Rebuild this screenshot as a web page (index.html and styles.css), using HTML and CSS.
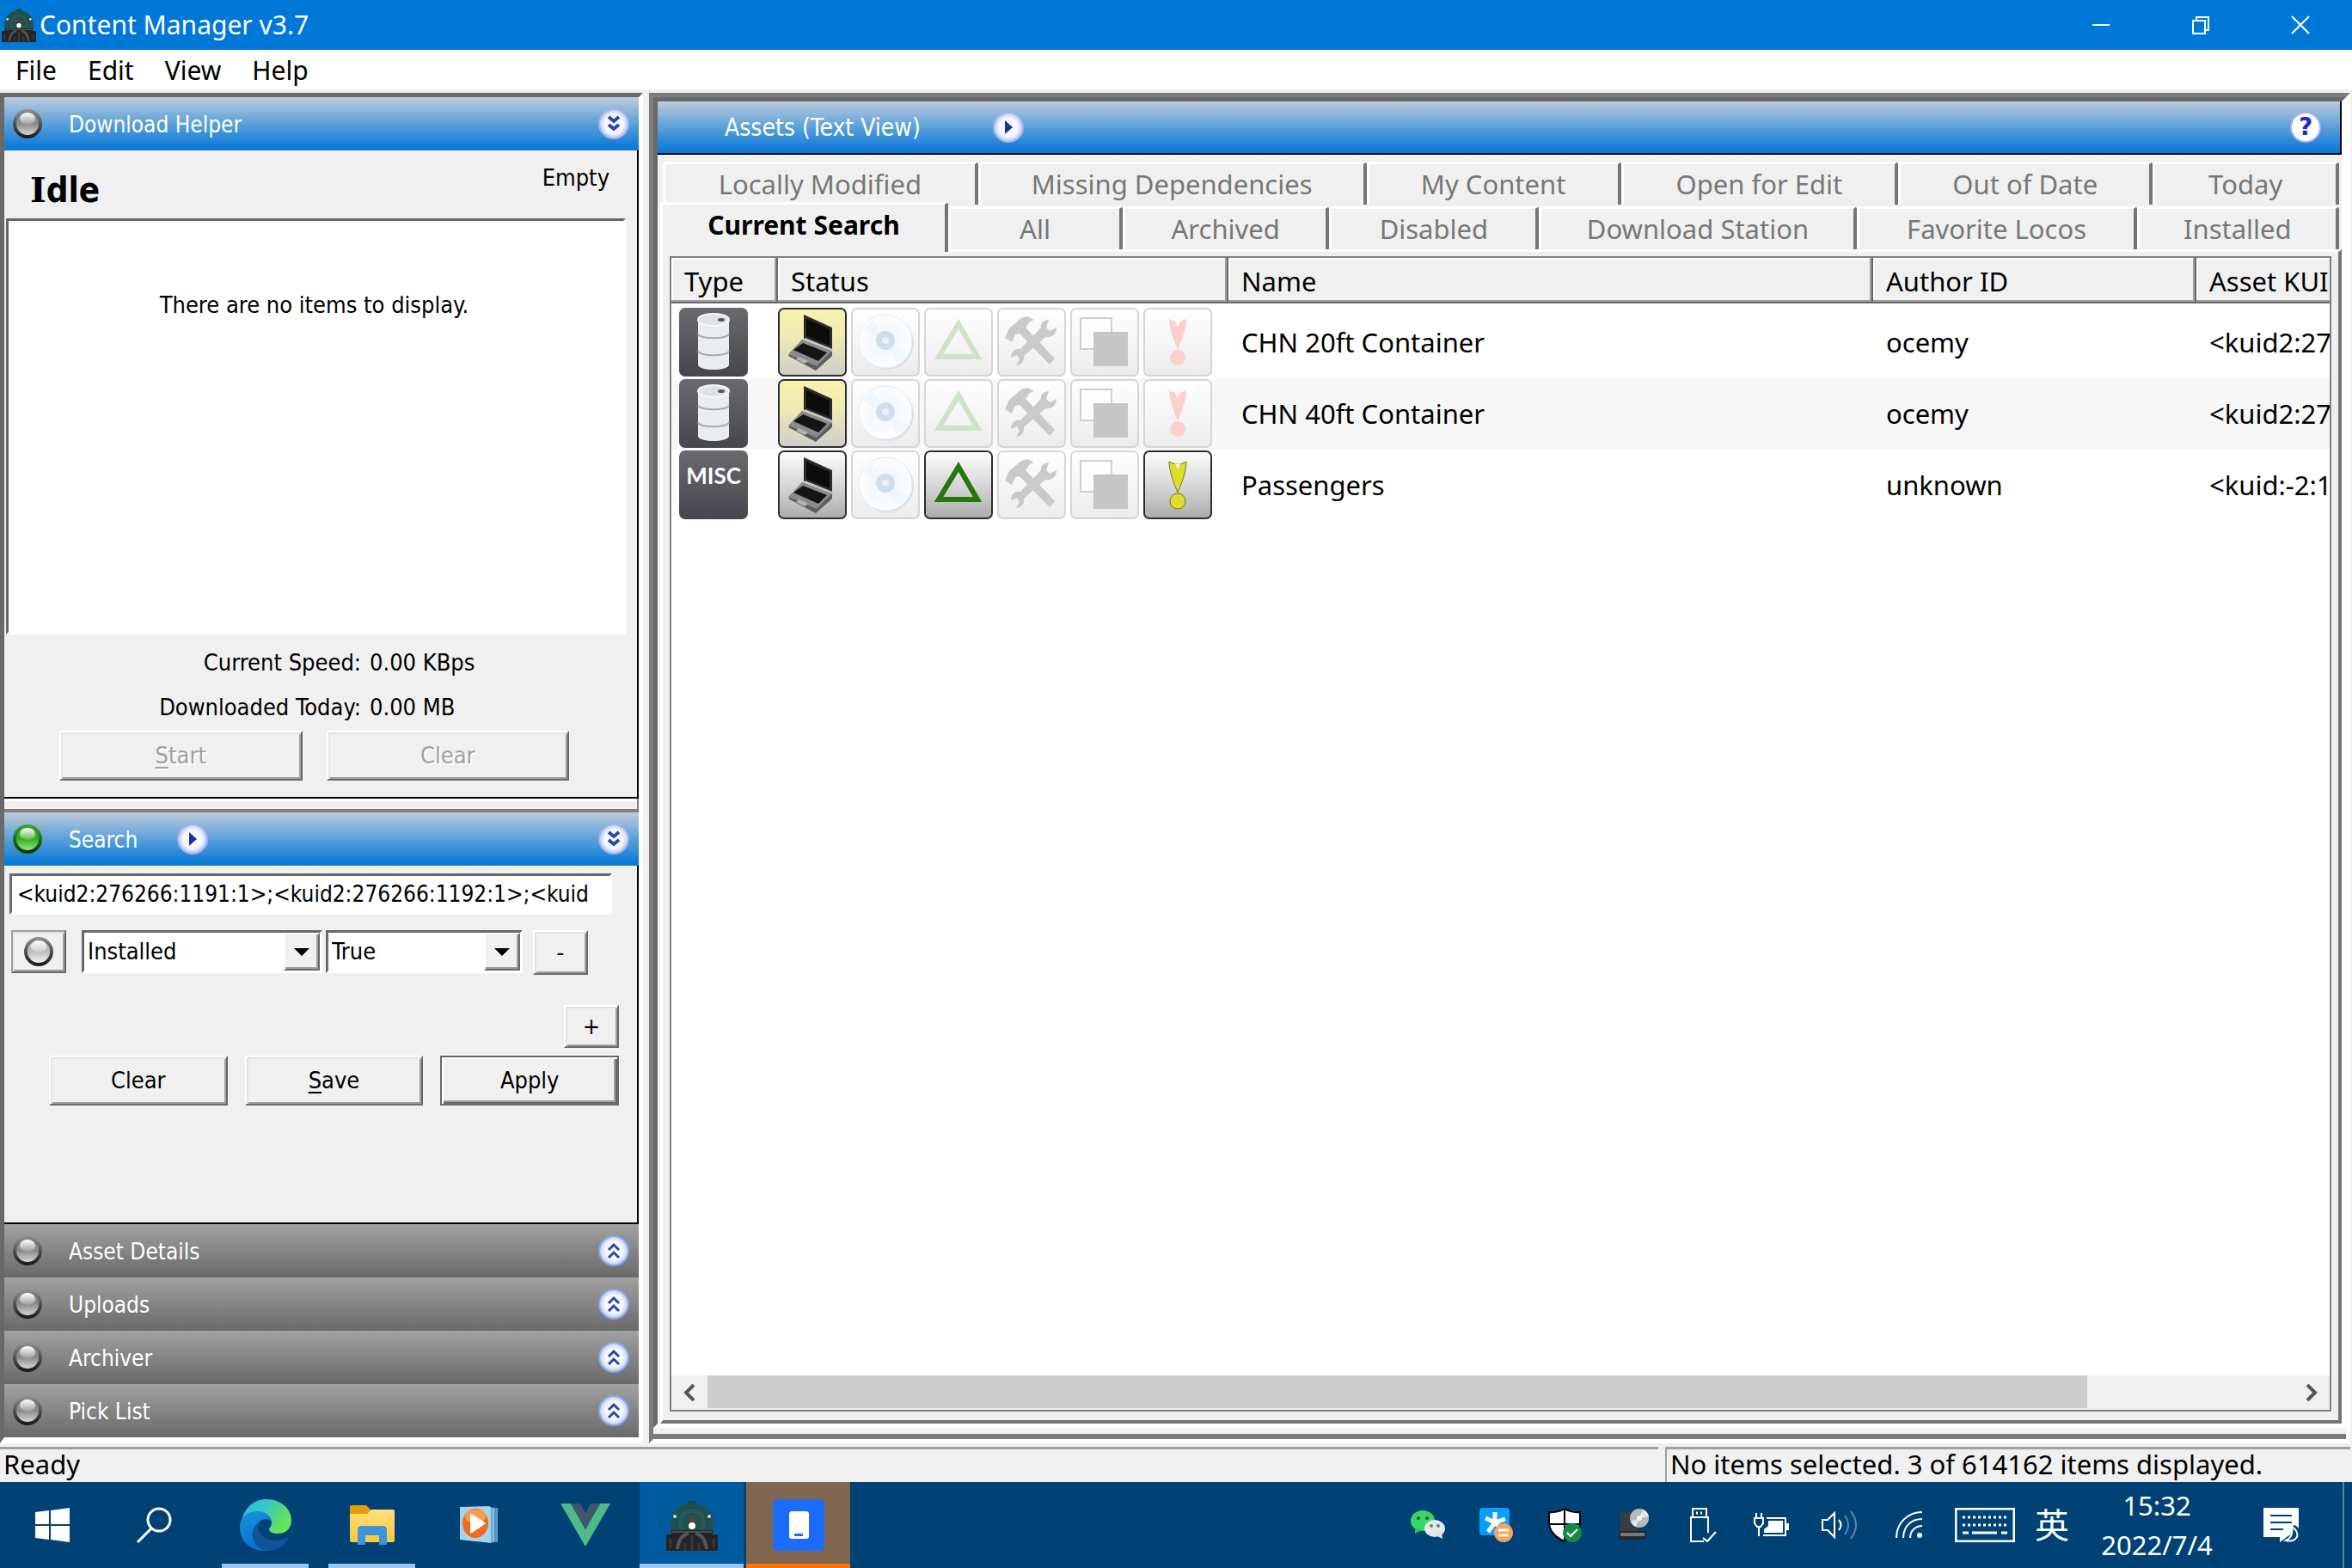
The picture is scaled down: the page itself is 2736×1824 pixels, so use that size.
FILE: index.html
```html
<!DOCTYPE html>
<html lang="en">
<head>
<meta charset="utf-8">
<meta name="viewport" content="width=device-width, initial-scale=1">
<title>Content Manager v3.7</title>
<link rel="stylesheet" href="styles.css">
</head>
<body>
<svg class="defs" aria-hidden="true">
  <defs>
    <linearGradient id="g-dark" x1="0" y1="0" x2="0" y2="1"><stop offset="0" stop-color="#6b6970"/><stop offset="1" stop-color="#47464d"/></linearGradient>
    <linearGradient id="g-yellow" x1="0" y1="0" x2="0" y2="1"><stop offset="0" stop-color="#f8f3ae"/><stop offset=".4" stop-color="#efebb2"/><stop offset="1" stop-color="#cfcfcb"/></linearGradient>
    <linearGradient id="g-grey" x1="0" y1="0" x2="0" y2="1"><stop offset="0" stop-color="#fdfdfd"/><stop offset=".45" stop-color="#dcdcdc"/><stop offset="1" stop-color="#ababab"/></linearGradient>
    <linearGradient id="g-faint" x1="0" y1="0" x2="0" y2="1"><stop offset="0" stop-color="#ffffff"/><stop offset="1" stop-color="#ececec"/></linearGradient>
    <linearGradient id="g-led" x1="0" y1="0" x2="0" y2="1"><stop offset="0" stop-color="#8d8d8d"/><stop offset=".5" stop-color="#8a8a8a"/><stop offset="1" stop-color="#e2e2e2"/></linearGradient>
    <linearGradient id="g-pale" x1="0" y1="0" x2="0" y2="1"><stop offset="0" stop-color="#c8c8c8"/><stop offset=".5" stop-color="#bdbdbd"/><stop offset="1" stop-color="#fafafa"/></linearGradient>
    <linearGradient id="g-ring" x1="0" y1="0" x2="0" y2="1"><stop offset="0" stop-color="#8b8b8b"/><stop offset="1" stop-color="#1c1c1c"/></linearGradient>
    <linearGradient id="g-green" x1="0" y1="0" x2="0" y2="1"><stop offset="0" stop-color="#3fae2c"/><stop offset=".5" stop-color="#35ad22"/><stop offset="1" stop-color="#a5ee86"/></linearGradient>
    <linearGradient id="g-gring" x1="0" y1="0" x2="0" y2="1"><stop offset="0" stop-color="#3fa03a"/><stop offset="1" stop-color="#0a3808"/></linearGradient>
    <linearGradient id="g-gloss" x1="0" y1="0" x2="0" y2="1"><stop offset="0" stop-color="#fff"/><stop offset="1" stop-color="#fff" stop-opacity=".15"/></linearGradient>
    <radialGradient id="g-orb"><stop offset="0" stop-color="#fff"/><stop offset=".65" stop-color="#f4f6ff"/><stop offset="1" stop-color="#b4c4f2"/></radialGradient>
    <radialGradient id="g-cd"><stop offset="0" stop-color="#fff"/><stop offset=".35" stop-color="#f3f8fc"/><stop offset="1" stop-color="#fcfdff"/></radialGradient>
    <linearGradient id="g-e1" x1="0" y1="0" x2="1" y2=".4"><stop offset="0" stop-color="#2fb4ee"/><stop offset=".5" stop-color="#36c8c0"/><stop offset="1" stop-color="#6be356"/></linearGradient>
    <linearGradient id="g-e2" x1="0" y1="0" x2=".4" y2="1"><stop offset="0" stop-color="#1795dd"/><stop offset="1" stop-color="#0c6fd0"/></linearGradient>
    <linearGradient id="g-fold" x1="0" y1="0" x2="0" y2="1"><stop offset="0" stop-color="#ffe07a"/><stop offset="1" stop-color="#f8c83c"/></linearGradient>

    <symbol id="led" viewBox="0 0 36 36"><circle cx="18" cy="18" r="15" fill="url(#g-led)" stroke="url(#g-ring)" stroke-width="4"/><ellipse cx="18" cy="12" rx="9" ry="7" fill="url(#g-gloss)"/></symbol>
    <symbol id="led-pale" viewBox="0 0 36 36"><circle cx="18" cy="18" r="15" fill="url(#g-pale)" stroke="url(#g-ring)" stroke-width="4"/><ellipse cx="18" cy="12" rx="9" ry="7" fill="url(#g-gloss)"/></symbol>
    <symbol id="led-on" viewBox="0 0 36 36"><circle cx="18" cy="18" r="15" fill="url(#g-green)" stroke="url(#g-gring)" stroke-width="4"/><ellipse cx="18" cy="12" rx="9" ry="7" fill="url(#g-gloss)"/></symbol>
    <symbol id="orb-down" viewBox="0 0 36 36"><circle cx="18" cy="18" r="17" fill="url(#g-orb)" stroke="#a3b2ea" stroke-width="2"/><path d="M12 10l6 5 6-5M12 19l6 5 6-5" fill="none" stroke="#2748a8" stroke-width="4"/></symbol>
    <symbol id="orb-up" viewBox="0 0 36 36"><circle cx="18" cy="18" r="17" fill="url(#g-orb)" stroke="#88a6ea" stroke-width="2"/><path d="M12 17l6-6 6 6M12 26l6-6 6 6" fill="none" stroke="#2748a8" stroke-width="3"/></symbol>
    <symbol id="orb-play" viewBox="0 0 36 36"><circle cx="18" cy="18" r="17" fill="url(#g-orb)" stroke="#a3b2ea" stroke-width="2"/><path d="M14 10l9 8-9 8z" fill="#1b2fa0"/></symbol>

    <symbol id="barrel" viewBox="0 0 80 80"><rect width="80" height="80" rx="7" fill="url(#g-dark)"/><path d="M22 14v52c0 8 36 8 36 0V14z" fill="#e9edef"/><ellipse cx="40" cy="14" rx="18" ry="7" fill="#dfe3e6" stroke="#f6f8f9" stroke-width="2"/><path d="M22 30c0 7 36 7 36 0M22 50c0 7 36 7 36 0" fill="none" stroke="#a5abb0" stroke-width="2"/><ellipse cx="49" cy="14" rx="4" ry="2" fill="#55565c"/></symbol>
    <symbol id="misc" viewBox="0 0 80 80"><rect width="80" height="80" rx="7" fill="url(#g-dark)"/><text x="40" y="39" text-anchor="middle" class="misc-text">MISC</text></symbol>
    <symbol id="laptop" viewBox="0 0 80 80"><path d="M30 8l33 15v26L30 36z" fill="#2a2a2a"/><path d="M33 13l27 12v19L33 33z" fill="#0c0c0c"/><path d="M28 37l35 14v5L44 73 12 56z" fill="#5c5c5c"/><path d="M28 37l35 13-18 18-33-14z" fill="#8b8b8b"/><path d="M29 41l28 11-10 10-29-13z" fill="#141414"/><path d="M24 57l11 5-4 3-10-5z" fill="#b4b4b4"/><path d="M31 36l32 13" stroke="#c5c5c5" stroke-width="2"/></symbol>
    <symbol id="on-yellow" viewBox="0 0 80 80"><rect x="1" y="1" width="78" height="78" rx="6" fill="url(#g-yellow)" stroke="#2f2f2f" stroke-width="2"/></symbol>
    <symbol id="on-grey" viewBox="0 0 80 80"><rect x="1" y="1" width="78" height="78" rx="6" fill="url(#g-grey)" stroke="#2f2f2f" stroke-width="2"/></symbol>
    <symbol id="off" viewBox="0 0 80 80"><rect x="1" y="1" width="78" height="78" rx="6" fill="url(#g-faint)" stroke="#d6d6d6" stroke-width="2"/></symbol>
    <symbol id="cd" viewBox="0 0 80 80"><use href="#off"/><circle cx="42" cy="41" r="31" fill="#dcdfe3"/><circle cx="40" cy="39" r="31" fill="url(#g-cd)" stroke="#e6edf4"/><path d="M40 39L14 26A29 29 0 0 1 26 14z M40 39L66 52A29 29 0 0 1 54 64z" fill="#f0f7fc"/><circle cx="40" cy="38" r="11" fill="#cbdff1"/><circle cx="40" cy="38" r="4" fill="#efeef0"/></symbol>
    <symbol id="tri-off" viewBox="0 0 80 80"><use href="#off"/><path d="M40 19L62 57H17z" fill="none" stroke="#cfe3c9" stroke-width="6"/></symbol>
    <symbol id="tri-on" viewBox="0 0 80 80"><use href="#on-grey"/><path d="M40 19L62 57H17z" fill="none" stroke="#24780c" stroke-width="6"/></symbol>
    <symbol id="tools" viewBox="0 0 80 80"><use href="#off"/><g fill="#cbc9ca"><path d="M9 35l5-11 14-12 7-2 8 4-5 2-5 7 34 36-6 7-35-36-5 1-4 9z"/><path d="M60 14l-3 9 4 4 8-4c0 8-6 12-13 11L31 56c1 6-3 11-9 11l4-7-3-5-7 3c0-7 5-11 11-10l24-25c-1-5 3-9 9-9z"/></g></symbol>
    <symbol id="copies" viewBox="0 0 80 80"><use href="#off"/><rect x="12" y="12" width="36" height="36" fill="#fdfdfd" stroke="#cfcfcf" stroke-width="2"/><rect x="27" y="28" width="40" height="40" fill="#c6c6c6"/></symbol>
    <symbol id="bang-off" viewBox="0 0 80 80"><use href="#off"/><path d="M30 13q10 6 20 0c0 12-6 26-10 36-4-10-10-24-10-36z" fill="#fccfcd"/><circle cx="40" cy="58" r="9" fill="#fccfcd"/><path d="M36 14q4 3 8 0l-4 8z" fill="#fff"/></symbol>
    <symbol id="bang-on" viewBox="0 0 80 80"><use href="#on-grey"/><g stroke="#77751c" stroke-width="1"><path d="M30 13q10 6 20 0c0 12-6 26-10 36-4-10-10-24-10-36z" fill="#dedc2c"/><circle cx="40" cy="59" r="9" fill="#dedc2c"/></g><path d="M36 14q4 3 8 0l-4 8z" fill="#fbf3c0"/></symbol>

    <symbol id="train" viewBox="0 0 60 60"><path d="M25 2h10v5H25z" fill="#17434a"/><path d="M5 42V29C5 15 15 5 30 5s25 10 25 24v13z" fill="#204f50"/><circle cx="30" cy="27" r="17" fill="#245856" stroke="#1b4547"/><circle cx="30" cy="27" r="10" fill="#225150" stroke="#1a4142"/><path d="M0 41h6v-5h48v5h6v19H0z" fill="#232427"/><path d="M7 38h46" stroke="#4f4c4a" stroke-width="2"/><path d="M13 58q2-16 13-18M47 58q-2-16-13-18" fill="none" stroke="#555454" stroke-width="4"/><path d="M5 46v10M22 50v10M30 42v18M38 50v10M55 46v10" stroke="#3a3736" stroke-width="3"/><path d="M27 20h6v8h-6z" fill="#5b3f35"/><circle cx="30" cy="31" r="4" fill="#fff"/><circle cx="10" cy="20" r="2" fill="#d5e6e6"/><circle cx="50" cy="20" r="2" fill="#d5e6e6"/></symbol>
  </defs>
</svg>

<header class="titlebar">
  <svg class="app-icon" aria-hidden="true"><use href="#train"/></svg>
  <h1 class="app-title">Content Manager v3.7</h1>
  <div class="window-controls">
    <button type="button" aria-label="Minimize"><svg width="22" height="22" viewBox="0 0 22 22"><path d="M1 11h20" stroke="#fff" stroke-width="2"/></svg></button>
    <button type="button" aria-label="Restore"><svg width="22" height="22" viewBox="0 0 22 22" fill="none" stroke="#fff" stroke-width="2"><path d="M2 6h14v15H2zM6 6V2h14v15h-4"/></svg></button>
    <button type="button" aria-label="Close"><svg width="22" height="22" viewBox="0 0 22 22"><path d="M1 1l20 20M21 1L1 21" stroke="#fff" stroke-width="2"/></svg></button>
  </div>
</header>

<nav class="menubar">
  <button type="button">File</button><button type="button">Edit</button><button type="button">View</button><button type="button">Help</button>
</nav>

<main class="workspace">
  <aside class="sidebar">
    <section class="panel">
      <header class="bar bar-blue">
        <svg class="orb" aria-hidden="true"><use href="#led"/></svg>
        <h2>Download Helper</h2>
        <button type="button" class="orb-button collapse" aria-label="Collapse Download Helper"><svg class="orb"><use href="#orb-down"/></svg></button>
      </header>
      <div class="panel-body downloads">
        <div class="download-state"><strong><span class="serif-i">I</span>dle</strong><span>Empty</span></div>
        <div class="download-list">There are no items to display.</div>
        <dl class="stats">
          <dt>Current Speed:</dt><dd>0.00 KBps</dd>
          <dt>Downloaded Today:</dt><dd>0.00 MB</dd>
        </dl>
        <div class="download-actions">
          <button type="button" class="btn" disabled><u>S</u>tart</button>
          <button type="button" class="btn" disabled>Clear</button>
        </div>
      </div>
    </section>
    <div class="splitter"></div>
    <section class="panel panel-grow">
      <header class="bar bar-blue">
        <svg class="orb" aria-hidden="true"><use href="#led-on"/></svg>
        <h2>Search</h2>
        <button type="button" class="orb-button search-menu" aria-label="Search menu"><svg class="orb"><use href="#orb-play"/></svg></button>
        <button type="button" class="orb-button collapse" aria-label="Collapse Search"><svg class="orb"><use href="#orb-down"/></svg></button>
      </header>
      <form class="panel-body search">
        <input class="query" type="text" aria-label="Search text" value="&lt;kuid2:276266:1191:1&gt;;&lt;kuid2:276266:1192:1&gt;;&lt;kuid">
        <div class="filter">
          <button type="button" class="btn btn-small btn-led" aria-label="Toggle filter"><svg class="orb"><use href="#led-pale"/></svg></button>
          <div class="select filter-field"><select aria-label="Filter field"><option>Installed</option></select><span class="drop"><svg width="18" height="9" viewBox="0 0 18 9"><path d="M0 0h18L9 9z"/></svg></span></div>
          <div class="select filter-value"><select aria-label="Filter value"><option>True</option></select><span class="drop"><svg width="18" height="9" viewBox="0 0 18 9"><path d="M0 0h18L9 9z"/></svg></span></div>
          <button type="button" class="btn btn-small btn-remove" aria-label="Remove filter">-</button>
        </div>
        <button type="button" class="btn btn-small btn-add" aria-label="Add filter">+</button>
        <div class="search-actions">
          <button type="button" class="btn">Clear</button>
          <button type="button" class="btn"><u>S</u>ave</button>
          <button type="button" class="btn btn-default">Apply</button>
        </div>
      </form>
    </section>
    <section class="bar bar-grey"><svg class="orb" aria-hidden="true"><use href="#led"/></svg><h2>Asset Details</h2><button type="button" class="orb-button collapse" aria-label="Expand Asset Details"><svg class="orb"><use href="#orb-up"/></svg></button></section>
    <section class="bar bar-grey"><svg class="orb" aria-hidden="true"><use href="#led"/></svg><h2>Uploads</h2><button type="button" class="orb-button collapse" aria-label="Expand Uploads"><svg class="orb"><use href="#orb-up"/></svg></button></section>
    <section class="bar bar-grey"><svg class="orb" aria-hidden="true"><use href="#led"/></svg><h2>Archiver</h2><button type="button" class="orb-button collapse" aria-label="Expand Archiver"><svg class="orb"><use href="#orb-up"/></svg></button></section>
    <section class="bar bar-grey"><svg class="orb" aria-hidden="true"><use href="#led"/></svg><h2>Pick List</h2><button type="button" class="orb-button collapse" aria-label="Expand Pick List"><svg class="orb"><use href="#orb-up"/></svg></button></section>
  </aside>

  <section class="assets">
    <div class="assets-inner">
      <header class="bar bar-blue bar-assets">
        <h2>Assets (Text View)</h2>
        <button type="button" class="orb-button assets-menu" aria-label="View menu"><svg class="orb"><use href="#orb-play"/></svg></button>
        <button type="button" class="orb-button collapse help" aria-label="Help">?</button>
      </header>
      <div class="tabs" role="tablist">
        <div class="tab-row tab-row-back">
          <button type="button" role="tab">Locally Modified</button><button type="button" role="tab">Missing Dependencies</button><button type="button" role="tab">My Content</button><button type="button" role="tab">Open for Edit</button><button type="button" role="tab">Out of Date</button><button type="button" role="tab">Today</button>
        </div>
        <div class="tab-row tab-row-front">
          <button type="button" role="tab" aria-selected="true">Current Search</button><button type="button" role="tab">All</button><button type="button" role="tab">Archived</button><button type="button" role="tab">Disabled</button><button type="button" role="tab">Download Station</button><button type="button" role="tab">Favorite Locos</button><button type="button" role="tab">Installed</button>
        </div>
      </div>
      <div class="sheet">
        <div class="list">
          <div class="list-view">
            <table>
              <colgroup><col class="c-type"><col class="c-status"><col class="c-name"><col class="c-author"><col class="c-kuid"></colgroup>
              <thead><tr><th scope="col">Type</th><th scope="col">Status</th><th scope="col">Name</th><th scope="col">Author ID</th><th scope="col">Asset KUI</th></tr></thead>
              <tbody>
                <tr>
                  <td class="type"><svg class="tile"><use href="#barrel"/></svg></td>
                  <td class="status"><div class="tiles"><svg class="tile"><use href="#on-yellow"/><use href="#laptop"/></svg><svg class="tile"><use href="#cd"/></svg><svg class="tile"><use href="#tri-off"/></svg><svg class="tile"><use href="#tools"/></svg><svg class="tile"><use href="#copies"/></svg><svg class="tile"><use href="#bang-off"/></svg></div></td>
                  <td>CHN 20ft Container</td><td>ocemy</td><td>&lt;kuid2:27</td>
                </tr>
                <tr>
                  <td class="type"><svg class="tile"><use href="#barrel"/></svg></td>
                  <td class="status"><div class="tiles"><svg class="tile"><use href="#on-yellow"/><use href="#laptop"/></svg><svg class="tile"><use href="#cd"/></svg><svg class="tile"><use href="#tri-off"/></svg><svg class="tile"><use href="#tools"/></svg><svg class="tile"><use href="#copies"/></svg><svg class="tile"><use href="#bang-off"/></svg></div></td>
                  <td>CHN 40ft Container</td><td>ocemy</td><td>&lt;kuid2:27</td>
                </tr>
                <tr>
                  <td class="type"><svg class="tile"><use href="#misc"/></svg></td>
                  <td class="status"><div class="tiles"><svg class="tile"><use href="#on-grey"/><use href="#laptop"/></svg><svg class="tile"><use href="#cd"/></svg><svg class="tile"><use href="#tri-on"/></svg><svg class="tile"><use href="#tools"/></svg><svg class="tile"><use href="#copies"/></svg><svg class="tile"><use href="#bang-on"/></svg></div></td>
                  <td>Passengers</td><td>unknown</td><td>&lt;kuid:-2:1</td>
                </tr>
              </tbody>
            </table>
          </div>
          <div class="scrollbar">
            <button type="button" aria-label="Scroll left"><svg width="16" height="20" viewBox="0 0 16 20"><path d="M13 1L4 10l9 9" fill="none" stroke="#555" stroke-width="4"/></svg></button>
            <div class="track"><div class="thumb"></div></div>
            <button type="button" aria-label="Scroll right"><svg width="16" height="20" viewBox="0 0 16 20"><path d="M3 1l9 9-9 9" fill="none" stroke="#555" stroke-width="4"/></svg></button>
          </div>
        </div>
      </div>
    </div>
    <div class="dock-strip"></div>
  </section>
</main>

<footer class="statusbar"><div class="status-main">Ready</div><div class="status-count">No items selected. 3 of 614162 items displayed.</div></footer>

<div class="taskbar">
  <div class="apps">
    <button type="button" aria-label="Start"><svg width="40" height="40" viewBox="0 0 40 40" fill="#fff"><path d="M0 5l16-2v16H0zM18 3l22-3v19H18zM0 21h16v16L0 35zM18 21h22v19l-22-3z"/></svg></button>
    <button type="button" class="find" aria-label="Search"><svg width="42" height="42" viewBox="0 0 42 42" fill="none" stroke="#fff" stroke-width="3"><circle cx="27" cy="15" r="13"/><path d="M18 25L2 41"/></svg></button>
    <button type="button" class="running" aria-label="Edge"><svg width="60" height="60" viewBox="0 0 60 60"><path d="M2 26C5 10 16 0 31 0c17 0 29 11 29 25 0 9-7 15-15 15-7 0-11-2-11-5 0-2 3-3 3-8 0-7-7-12-15-12C12 15 4 20 2 26z" fill="url(#g-e1)"/><path d="M0 32c0-11 9-18 20-18 9 0 16 5 17 12-3-3-7-4-11-2-6 3-9 9-9 16 0 10 7 18 17 20C14 62 0 50 0 32z" fill="url(#g-e2)"/><path d="M24 26c-7 4-11 11-9 19 2 9 10 15 19 15 10-1 18-6 22-13 1-2 0-3-2-2-4 2-8 3-13 3-11 0-20-7-20-15 0-3 1-5 3-7z" fill="#12529b"/></svg></button>
    <button type="button" class="running" aria-label="File Explorer"><svg width="54" height="46" viewBox="0 0 54 46"><path d="M1 2q0-2 2-2h17l5 5v8H1z" fill="#e39f0b"/><path d="M1 10h20l5-5h25q2 0 2 2v34q0 2-2 2H3q-2 0-2-2z" fill="url(#g-fold)"/><path d="M10 46V29q0-5 5-5h24q5 0 5 5v17h-9V35H19v11z" fill="#3d94d8"/></svg></button>
    <button type="button" aria-label="Media Player"><svg width="46" height="44" viewBox="0 0 46 44"><path d="M8 1l37 1v40l-37-2z" fill="#5d9fcb"/><path d="M4 1l37 1v40L4 39z" fill="#86c0e2"/><path d="M1 1l34-1 3 2v41L1 39z" fill="#a5d3ec"/><path d="M38 2v41M42 2v40" stroke="#3f86b5"/><ellipse cx="19" cy="20" rx="15" ry="17" fill="#ee6c1f"/><ellipse cx="19" cy="12" rx="12" ry="8" fill="#f89a4a"/><path d="M13 10q0-2 2-1l15 10q1 1 0 2L15 31q-2 1-2-1z" fill="#fff"/></svg></button>
    <button type="button" aria-label="Vue"><svg width="58" height="50" viewBox="0 0 58 50"><path d="M0 0h12l17 30L46 0h12L29 50z" fill="#50b988"/><path d="M12 0h11l6 11 6-11h11L29 30z" fill="#40566b"/></svg></button>
    <button type="button" class="running active" aria-label="Content Manager"><svg width="60" height="60"><use href="#train"/></svg></button>
    <button type="button" class="alert" aria-label="Phone link"><svg width="60" height="60" viewBox="0 0 60 60"><rect width="60" height="60" rx="5" fill="#1b6cfb"/><rect x="19" y="14" width="23" height="32" rx="3" fill="#fff"/><rect x="25" y="40" width="10" height="3" fill="#1b6cfb"/></svg></button>
  </div>
  <div class="tray">
    <button type="button" aria-label="WeChat"><svg width="42" height="42" viewBox="0 0 42 42"><ellipse cx="15" cy="16" rx="14" ry="12" fill="#38d56c"/><path d="M6 24v7l8-4z" fill="#25c45c"/><circle cx="10" cy="13" r="2" fill="#16603a"/><circle cx="20" cy="13" r="2" fill="#16603a"/><ellipse cx="29" cy="25" rx="12" ry="10" fill="#e6e8ea"/><path d="M30 33l8 4-1-8z" fill="#e0e2e4"/><circle cx="25" cy="22" r="2" fill="#7c7f82"/><circle cx="33" cy="22" r="2" fill="#7c7f82"/></svg></button>
    <button type="button" aria-label="Sync tool"><svg width="40" height="40" viewBox="0 0 40 40"><rect width="35" height="32" rx="4" fill="#0b9dfd"/><path d="M18 5v12M18 17L7 12M18 17l12-4M18 17l-8 11M18 17l6 6" stroke="#fff" stroke-width="5"/><circle cx="28" cy="29" r="11" fill="#f8a35c"/><path d="M22 26h12M22 32h12" stroke="#fff" stroke-width="3"/></svg></button>
    <button type="button" aria-label="Security"><svg width="40" height="40" viewBox="0 0 40 40"><path d="M1 5q10 1 18-4 8 5 18 4v12c0 10-8 18-18 22C9 35 1 27 1 17z" fill="#fff" stroke="#000" stroke-width="2"/><path d="M19 1v37M1 19h36" stroke="#000" stroke-width="2"/><circle cx="28" cy="29" r="11" fill="#158a45"/><path d="M22 29l4 4 8-8" fill="none" stroke="#fff" stroke-width="2"/></svg></button>
    <button type="button" aria-label="Disc drive"><svg width="36" height="38" viewBox="0 0 36 38"><path d="M2 4h20v22H2z" fill="#3b3c40"/><path d="M0 26h32v10H0z" fill="#27282b"/><path d="M2 28h28v4H2z" fill="#77787b"/><circle cx="24" cy="11" r="11" fill="#b7babd"/><path d="M24 11l4-10a11 11 0 0 1 7 8zM24 11l-10 4a11 11 0 0 0 6 6z" fill="#e3e9e6"/><circle cx="24" cy="11" r="3" fill="#f6f6f6"/></svg></button>
    <button type="button" aria-label="USB device"><svg width="32" height="40" viewBox="0 0 32 40" fill="none" stroke="#fff" stroke-width="2"><path d="M4 11V1h16v10M17 39H2V11h20v18M16 35l5 4L31 28"/><path d="M8 6h2M13 6h2" stroke-width="3"/></svg></button>
    <button type="button" aria-label="Battery"><svg width="42" height="28" viewBox="0 0 42 28" fill="none" stroke="#fff" stroke-width="2"><path d="M3 0v6M9 0v6M1 6h10v6l-3 4H4l-3-4zM6 16v11M15 6h22v20H11"/><path d="M17 9h17v14H12v-4l5-4z" fill="#fff" stroke="none"/><path d="M38 12h3v8h-3z" fill="#fff" stroke="none"/></svg></button>
    <button type="button" aria-label="Volume"><svg width="44" height="38" viewBox="0 0 44 38" fill="none" stroke="#fff" stroke-width="2"><path d="M1 13h6l8-8v28l-8-8H1zM20 13q5 6 0 12"/><path d="M27 8q8 11 0 22M34 3q12 16 0 32" stroke="#5b87ab"/></svg></button>
    <button type="button" aria-label="Network"><svg width="32" height="32" viewBox="0 0 32 32" fill="none" stroke="#fff" stroke-width="2"><path d="M1 31C1 14 14 1 31 1M9 31C9 18 18 9 31 9M17 31c0-8 6-14 14-14"/><circle cx="28" cy="28" r="3" fill="#fff" stroke="none"/></svg></button>
    <button type="button" class="keyboard" aria-label="Touch keyboard"><svg width="70" height="40" viewBox="0 0 70 40" fill="none" stroke="#fff"><rect x="1" y="1" width="68" height="38" stroke-width="3"/><path d="M9 11h52M9 20h52" stroke-width="3" stroke-dasharray="3 3"/><path d="M9 29h7M20 29h29M54 29h7" stroke-width="3"/></svg></button>
    <button type="button" class="ime" lang="zh">英</button>
    <button type="button" class="clock"><time>15:32</time><time>2022/7/4</time></button>
    <button type="button" class="notify" aria-label="Notifications"><svg width="42" height="40" viewBox="0 0 42 40"><path d="M0 0h41v24q-3-4-6-4 0 10-8 14l-8 6v-6H0z" fill="#fff"/><path d="M8 9h25M8 17h25M8 25h15" stroke="#004275" stroke-width="2"/><path d="M33 22q8 5 6 12-4 6-13 4 9-4 7-16z" fill="#004275" stroke="#fff" stroke-width="2"/></svg></button>
    <button type="button" class="show-desktop" aria-label="Show desktop"></button>
  </div>
</div>
</body>
</html>
```
FILE: styles.css
```css
:root {
  --face: #f0f0f0;
  --shade: #a0a0a0;
  --dark: #696969;
  --light: #e3e3e3;
  --accent: #0078d7;
  --task: #004275;
  --ui: "Noto Sans", "Noto Sans CJK SC", sans-serif;
  --small: "DejaVu Sans Condensed", "DejaVu Sans", sans-serif;
}

* { box-sizing: border-box; }

body {
  margin: 0;
  min-height: 100vh;
  display: flex;
  flex-direction: column;
  background: var(--face);
  color: #000;
  font: 31px/40px var(--ui);
}

button, input, select { font: inherit; color: inherit; margin: 0; }
button { padding: 0; border: 0; background: none; }
h1, h2, dl, dd { margin: 0; font-weight: 400; font-size: inherit; }
svg { display: block; flex: none; }
.defs { position: absolute; width: 0; height: 0; }

/* Title bar and menu */
.titlebar {
  display: flex;
  align-items: center;
  height: 58px;
  padding-left: 2px;
  background: var(--accent);
  color: #fff;
}
.app-icon { width: 40px; height: 40px; margin-right: 4px; }
.app-title { font-size: 30px; }
.window-controls { display: flex; margin: 0 2px 0 auto; align-self: stretch; }
.window-controls button { width: 116px; display: grid; place-items: center; }

.menubar {
  display: flex;
  height: 46px;
  background: #fff;
  font-size: 30px;
}
.menubar button { padding: 2px 18px 0; }

/* Main split */
.workspace {
  flex: 1;
  display: grid;
  grid-template-columns: 748px minmax(0, 1fr);
  gap: 7px;
  padding: 4px 2px 4px 0;
}

.sidebar {
  display: flex;
  flex-direction: column;
  border: 5px solid;
  border-color: var(--dark) #fff #fff var(--dark);
  border-bottom-width: 7px;
  font: 27px/36px var(--small);
}

.bar {
  display: flex;
  align-items: center;
  height: 62px;
  padding: 0 11px 0 9px;
  color: #fff;
  font: 26px/36px var(--small);
}
.bar-blue { background: linear-gradient(#bccbdb, #5ba0d9 50%, #0f7dd8 92%, #0a78d4); }
.bar-grey { background: linear-gradient(#a1a1a1, #696969); }
.bar h2 { margin: 2px 0 0 30px; }
.orb { width: 36px; height: 36px; }
.collapse { margin-left: auto; }
.search-menu { margin-left: 46px; }

.panel { display: flex; flex-direction: column; }
.panel-grow { flex: 1; }
.panel-body {
  flex: 1;
  border: solid #000;
  border-width: 0 2px 2px 0;
}

.splitter {
  height: 16px;
  border-bottom: 4px solid #808080;
  border-right: 2px solid #808080;
  box-shadow: inset 0 3px #fff;
}

/* Download helper */
.download-state {
  display: flex;
  justify-content: space-between;
  height: 79px;
  padding: 14px 32px 0 30px;
}
.download-state strong { font-size: 40px; line-height: 64px; }
.serif-i { font-family: "DejaVu Serif", serif; }
.download-list {
  height: 484px;
  margin: 0 13px 0 2px;
  padding: 80px 4px 0 0;
  border: 3px solid;
  border-color: var(--dark) #fff #fff var(--dark);
  background: #fff;
  text-align: center;
}
.stats {
  display: grid;
  grid-template-columns: 415px 1fr;
  column-gap: 10px;
  row-gap: 16px;
  padding: 15px 0 9px;
}
.stats dt { text-align: right; }
.download-actions { display: flex; gap: 28px; padding: 0 79px 19px 64px; }
.download-actions .btn { flex: 1; }

.btn {
  height: 58px;
  border: 2px solid;
  border-color: #fff var(--dark) var(--dark) #fff;
  box-shadow: inset 2px 2px var(--light), inset -2px -2px var(--shade);
  background: var(--face);
}
.btn u { text-underline-offset: 4px; text-decoration-thickness: 2px; }
.btn:disabled { color: var(--shade); text-shadow: 2px 2px #fff; }
.btn-default {
  border-color: var(--dark);
  box-shadow: inset 2px 2px #fff, inset -2px -2px var(--dark), inset -4px -4px var(--shade);
}
.btn-small { width: 64px; height: 50px; }

/* Search */
.search { padding: 9px 21px 0 6px; }
.query {
  display: block;
  width: calc(100% - 8px);
  height: 48px;
  padding: 0 2px 0 6px;
  border: 3px solid;
  border-color: var(--dark) #fff #fff var(--dark);
  background: #fff;
  font-size: 26px;
}
.filter { display: flex; align-items: flex-start; gap: 4px; padding: 18px 0 0 2px; }
.btn-led { display: grid; place-items: center; margin-right: 14px; border-color: var(--shade) var(--dark) var(--dark) var(--shade); }
.select { display: grid; height: 50px; border: 3px solid; border-color: var(--dark) #fff #fff var(--dark); background: #fff; }
.filter-field { width: 280px; }
.filter-value { width: 229px; }
.btn-remove { margin-left: 8px; height: 52px; }
.select select { grid-area: 1 / 1; appearance: none; border: 0; padding: 0 4px; background: none; }
.drop {
  grid-area: 1 / 1;
  justify-self: end;
  width: 42px;
  display: grid;
  place-items: center;
  pointer-events: none;
  border: 2px solid;
  border-color: #fff var(--dark) var(--dark) #fff;
  box-shadow: inset -2px -2px var(--shade);
  background: var(--face);
}
.btn-add { display: block; margin: 35px 0 9px auto; }
.search-actions { display: flex; gap: 20px; padding-left: 46px; }
.search-actions .btn { flex: 1; }

/* Assets */
.assets {
  display: flex;
  flex-direction: column;
  min-width: 0;
  border: 5px solid;
  border-color: #7c7c7c #fff #fff #7c7c7c;
}
.assets-inner {
  flex: 1;
  display: flex;
  flex-direction: column;
  border: 5px solid;
  border-color: var(--dark) #fff #fff var(--dark);
}
.dock-strip { height: 13px; border-bottom: 6px solid #7c7c7c; }
.bar-assets { border: solid #000; border-width: 0 2px 2px 0; padding: 0 22px 0 48px; font-size: 28px; }
.assets-menu { margin-left: 84px; }
.help {
  width: 36px;
  height: 36px;
  border: 2px solid #a3b2ea;
  border-radius: 50%;
  background: #fff;
  color: #2323e0;
  font: bold 28px/32px "DejaVu Sans", sans-serif;
}

.tabs { padding: 8px 3px 0 6px; }
.tab-row { display: flex; height: 52px; color: #777; }
.tab-row button {
  flex: 1 1 0;
  height: 50px;
  padding-bottom: 2px;
  border: 3px solid;
  border-color: #fff #757575 transparent #fff;
  border-width: 3px 4px 0 3px;
  border-radius: 4px 4px 0 0;
  white-space: nowrap;
}
.tab-row-back button:nth-child(1) { flex-grow: 367; }
.tab-row-back button:nth-child(2) { flex-grow: 454; }
.tab-row-back button:nth-child(3) { flex-grow: 295; }
.tab-row-back button:nth-child(4) { flex-grow: 322; }
.tab-row-back button:nth-child(5) { flex-grow: 295; }
.tab-row-back button:nth-child(6) { flex-grow: 214; }
.tab-row-front { height: 50px; }
.tab-row-front button:nth-child(1) { flex-grow: 336; }
.tab-row-front button:nth-child(2) { flex-grow: 201; }
.tab-row-front button:nth-child(3) { flex-grow: 239; }
.tab-row-front button:nth-child(4) { flex-grow: 243; }
.tab-row-front button:nth-child(5) { flex-grow: 372; }
.tab-row-front button:nth-child(6) { flex-grow: 326; }
.tab-row-front button:nth-child(7) { flex-grow: 234; }
.tab-row-front button[aria-selected="true"] {
  height: 58px;
  margin: -5px 0 0 -3px;
  padding-bottom: 8px;
  background: var(--face);
  color: #000;
  font-size: 30px;
  font-weight: 700;
  z-index: 1;
}

.sheet {
  flex: 1;
  display: flex;
  margin-left: 3px;
  padding: 5px 8px 10px;
  border: 3px solid;
  border-width: 3px 4px 4px 3px;
  border-color: #fff #757575 #757575 #fff;
}
.list {
  flex: 1;
  min-width: 0;
  display: flex;
  flex-direction: column;
  border: 2px solid #808080;
  background: #fff;
}
.list-view { flex: 1; overflow: hidden; }

table { width: 100%; table-layout: fixed; border-collapse: separate; border-spacing: 0; }
.c-type { width: 124px; }
.c-status { width: 524px; }
.c-name { width: 750px; }
.c-author { width: 376px; }
th {
  height: 57px;
  padding: 0 0 0 15px;
  border-bottom: 4px solid #fff;
  background: var(--face);
  box-shadow: inset -2px -2px var(--dark), inset -4px -4px var(--shade), inset 2px 2px #fff;
  text-align: left;
  font-weight: 400;
  white-space: nowrap;
}
th:last-child { box-shadow: inset 0 -2px var(--dark), inset 0 -4px var(--shade), inset 2px 2px #fff; }
td { height: 83px; padding: 0 0 2px 15px; white-space: nowrap; }
tbody tr:nth-child(even) { background: #f7f7f7; }
td.type { padding-left: 9px; }
td.status { padding-left: 0; }
.tiles { display: flex; gap: 5px; }
.tile { width: 80px; height: 80px; }
.misc-text { font: bold 26px Lato, sans-serif; fill: #fff; }

.scrollbar { display: flex; height: 40px; background: var(--face); }
.scrollbar button { width: 42px; display: grid; place-items: center; }
.track { flex: 1; }
.thumb { width: 87%; height: 38px; background: #cdcdcd; }

/* Status bar */
.statusbar { display: flex; gap: 8px; height: 41px; padding-right: 2px; line-height: 34px; }
.statusbar div { border-top: 3px solid var(--shade); padding-left: 4px; }
.status-main { flex: 1; }
.status-count { width: 797px; border-left: 2px solid var(--shade); }

/* Task bar */
.taskbar { display: flex; justify-content: space-between; height: 100px; background: var(--task); color: #fff; }
.apps { display: flex; gap: 3px; }
.apps button { position: relative; width: 121px; display: grid; place-items: center; }
.apps .find { padding-right: 12px; }
.running::after { content: ""; position: absolute; inset: auto 10px 0; height: 5px; background: #98c8ee; }
.active { background: #005a9e; }
.active::after { inset: auto 0 0; }
.apps .alert { background: #80664f; border-bottom: 5px solid #ff7200; padding-top: 5px; }
.tray { display: flex; }
.tray button { width: 80px; display: grid; place-items: center; }
.tray .keyboard { width: 96px; }
.tray .ime { width: 60px; font-size: 40px; }
.tray .clock { width: 184px; align-content: center; line-height: 46px; }
.tray .notify { width: 124px; padding-right: 18px; }
.tray .show-desktop { width: 11px; border-left: 2px solid #5b82a3; }
```
